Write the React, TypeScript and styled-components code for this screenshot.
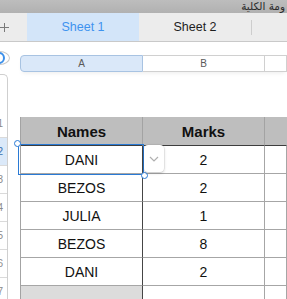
import React from "react";
import styled, { createGlobalStyle } from "styled-components";

const GlobalStyle = createGlobalStyle`
  html, body {
    margin: 0;
    padding: 0;
    background: #fff;
  }
  body {
    font-family: "Liberation Sans", Arial, sans-serif;
  }
  #root {
    width: 287px;
    height: 299px;
    overflow: hidden;
  }
`;

const Window = styled.div`
  width: 287px;
  height: 299px;
  overflow: hidden;
  display: flex;
  flex-direction: column;
  background: #fff;
`;

const TitleBar = styled.div`
  height: 13px;
  flex-shrink: 0;
  background: linear-gradient(#bdbdbd, #b1b1b1);
  display: flex;
  justify-content: flex-end;
  align-items: center;
  padding-right: 2px;
  overflow: hidden;
`;

const TitleText = styled.span`
  direction: rtl;
  font-family: "DejaVu Sans", "Noto Sans", sans-serif;
  font-size: 10.5px;
  line-height: 13px;
  color: #2b2b2b;
  white-space: nowrap;
`;

const TabBar = styled.div`
  height: 28px;
  flex-shrink: 0;
  display: flex;
  align-items: stretch;
  background: #ececec;
  border-bottom: 1px solid #c9c9c9;
`;

const PlusSlot = styled.div`
  width: 27px;
  display: flex;
  align-items: center;
`;

const Tab = styled.div<{ $active?: boolean }>`
  width: 112px;
  display: flex;
  align-items: center;
  justify-content: center;
  font-size: 12.5px;
  color: ${(p) => (p.$active ? "#3e93ef" : "#1e1e1e")};
  background: ${(p) => (p.$active ? "#d3e5f9" : "transparent")};
`;

const TabDivider = styled.div`
  width: 1px;
  height: 15px;
  align-self: center;
  background: #cdcdcd;
`;

const Body = styled.div`
  flex: 1;
  display: flex;
  overflow: hidden;
`;

const Gutter = styled.div`
  width: 20px;
  flex-shrink: 0;
  display: flex;
  flex-direction: column;
`;

const SelectAll = styled.div`
  width: 20px;
  height: 20px;
  margin: 9px 0 0 -12px;
  border: 1px solid #c8c8c8;
  border-radius: 50%;
  display: flex;
  align-items: center;
  justify-content: center;
  background: #fff;
`;

const SelectAllRing = styled.div`
  width: 8px;
  height: 8px;
  border: 2px solid #3c8fe9;
  border-radius: 50%;
`;

const RowHeaders = styled.div`
  margin: 9px 0 0 -12px;
  width: 19px;
  flex: 1;
  border-top: 1px solid #cfcfcf;
  border-right: 1px solid #cfcfcf;
  border-top-right-radius: 5px;
  display: flex;
  flex-direction: column;
`;

const RowHeaderSpacer = styled.div`
  height: 34px;
`;

const RowNum = styled.div<{ $active?: boolean; $h: number }>`
  height: ${(p) => p.$h - 1}px;
  flex-shrink: 0;
  border-bottom: 1px solid #dadada;
  background: ${(p) => (p.$active ? "#dbe9f9" : "transparent")};
  display: flex;
  align-items: center;
  justify-content: flex-end;
  padding-right: 4px;
  font-size: 10px;
  color: ${(p) => (p.$active ? "#3a6fae" : "#8a8a8a")};
`;

const Sheet = styled.div`
  flex: 1;
  display: flex;
  flex-direction: column;
  min-width: 0;
`;

const ColumnBar = styled.div`
  margin-top: 13px;
  height: 17px;
  display: flex;
  flex-shrink: 0;
  box-shadow: 0 3px 4px -2px rgba(0, 0, 0, 0.08);
`;

const ColHead = styled.div<{ $w?: number; $selected?: boolean }>`
  width: ${(p) => (p.$w ? `${p.$w}px` : "auto")};
  flex: ${(p) => (p.$w ? "0 0 auto" : "1")};
  box-sizing: border-box;
  display: flex;
  align-items: center;
  justify-content: center;
  font-size: 10px;
  color: #5a5a5a;
  border: 1px solid ${(p) => (p.$selected ? "#a8c3e2" : "#d0d0d0")};
  border-left-width: ${(p) => (p.$selected ? "1px" : "0")};
  border-radius: ${(p) => (p.$selected ? "4px 0 0 4px" : "0")};
  background: ${(p) => (p.$selected ? "#dae8f9" : "#fff")};
`;

const Table = styled.div`
  margin-top: 45px;
  display: grid;
  grid-template-columns: 122px 122px 1fr;
  grid-auto-rows: 28px;
  grid-template-rows: 29px;
  border-left: 1px solid #a3a3a3;
`;

const HeaderCell = styled.div<{ $last?: boolean }>`
  background: #bebebe;
  border-bottom: 1px solid #3d3d3d;
  border-right: 1px solid ${(p) => (p.$last ? "transparent" : "#a3a3a3")};
  display: flex;
  align-items: center;
  justify-content: center;
  font-weight: bold;
  font-size: 15px;
  color: #111;
`;

const Cell = styled.div<{ $divider?: boolean; $empty?: boolean }>`
  position: relative;
  border-bottom: 1px solid #a6a6a6;
  border-right: 1px solid ${(p) => (p.$divider ? "#454545" : "#a6a6a6")};
  background: ${(p) => (p.$empty ? "#dcdcdc" : "#fff")};
  display: flex;
  align-items: center;
  justify-content: center;
  font-size: 14px;
  color: #111;
`;

const Selection = styled.div`
  position: absolute;
  left: -3px;
  top: -2px;
  right: -2px;
  bottom: -2px;
  border: 1.5px solid #2a7ad5;
  z-index: 2;
  pointer-events: none;
`;

const Handle = styled.div<{ $corner: "tl" | "br" }>`
  position: absolute;
  width: 5px;
  height: 5px;
  border-radius: 50%;
  background: #fff;
  border: 1.5px solid #2a7ad5;
  ${(p) => (p.$corner === "tl" ? "left: -5px; top: -5px;" : "right: -5px; bottom: -5px;")}
`;

const Dropdown = styled.div`
  position: absolute;
  left: calc(100% + 2px);
  top: -1px;
  width: 20px;
  height: 27px;
  background: #fff;
  border-radius: 4px;
  box-shadow: 0 1px 3px rgba(0, 0, 0, 0.22), 0 0 0 0.5px rgba(0, 0, 0, 0.08);
  display: flex;
  align-items: center;
  justify-content: center;
  z-index: 3;
`;

const rows = [
  ["DANI", "2"],
  ["BEZOS", "2"],
  ["JULIA", "1"],
  ["BEZOS", "8"],
  ["DANI", "2"],
  ["", ""],
];

export default function App() {
  return (
    <>
      <GlobalStyle />
      <Window>
        <TitleBar>
          <TitleText>ومة الكلية</TitleText>
        </TitleBar>
        <TabBar>
          <PlusSlot>
            <svg width="9" height="9" viewBox="0 0 9 9">
              <path d="M4.5 0V9M0 4.5H9" stroke="#7a7a7a" strokeWidth="1" />
            </svg>
          </PlusSlot>
          <Tab $active>Sheet 1</Tab>
          <Tab>Sheet 2</Tab>
          <TabDivider />
        </TabBar>
        <Body>
          <Gutter>
            <SelectAll>
              <SelectAllRing />
            </SelectAll>
            <RowHeaders>
              <RowHeaderSpacer />
              <RowNum $h={29}>1</RowNum>
              {rows.map((_, i) => (
                <RowNum key={i} $h={28} $active={i === 0}>
                  {i + 2}
                </RowNum>
              ))}
            </RowHeaders>
          </Gutter>
          <Sheet>
            <ColumnBar>
              <ColHead $w={123} $selected>
                A
              </ColHead>
              <ColHead $w={122}>B</ColHead>
              <ColHead />
            </ColumnBar>
            <Table>
              <HeaderCell>Names</HeaderCell>
              <HeaderCell>Marks</HeaderCell>
              <HeaderCell $last />
              {rows.map(([name, mark], i) => (
                <React.Fragment key={i}>
                  <Cell $divider $empty={i === rows.length - 1}>
                    {name}
                    {i === 0 && (
                      <>
                        <Selection>
                          <Handle $corner="tl" />
                          <Handle $corner="br" />
                        </Selection>
                        <Dropdown>
                          <svg width="10" height="6" viewBox="0 0 10 6">
                            <path
                              d="M1 1L5 5L9 1"
                              fill="none"
                              stroke="#b0b0b0"
                              strokeWidth="1.2"
                            />
                          </svg>
                        </Dropdown>
                      </>
                    )}
                  </Cell>
                  <Cell>{mark}</Cell>
                  <Cell />
                </React.Fragment>
              ))}
            </Table>
          </Sheet>
        </Body>
      </Window>
    </>
  );
}
